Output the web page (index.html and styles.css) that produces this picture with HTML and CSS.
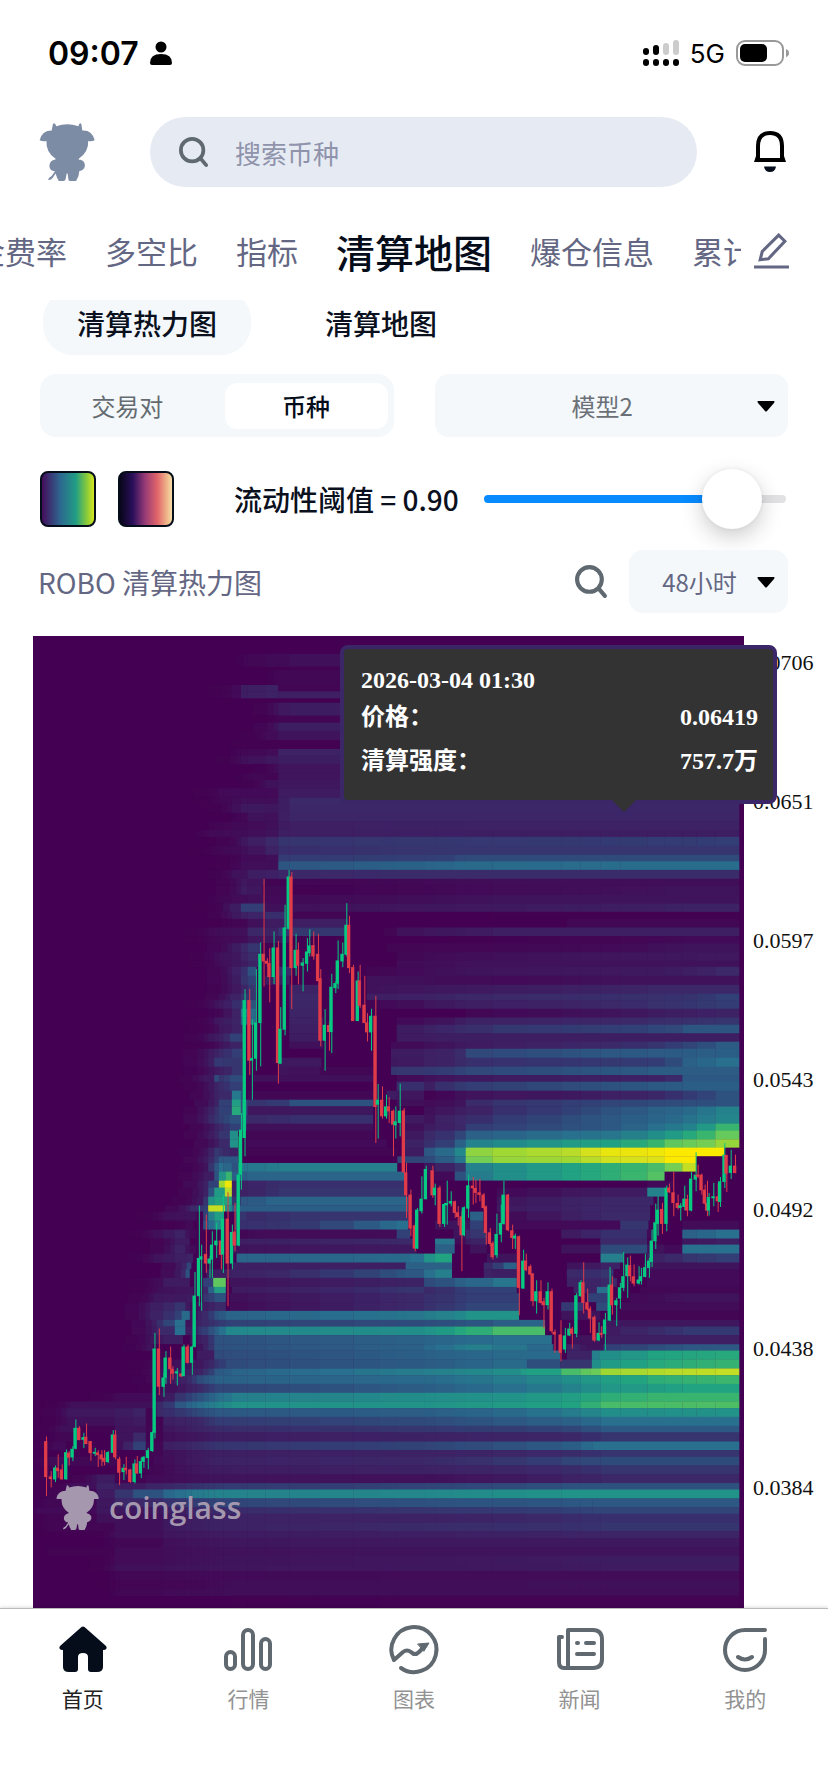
FILE: index.html
```html
<!DOCTYPE html>
<html lang="zh-CN">
<head>
<meta charset="utf-8">
<meta name="viewport" content="width=device-width, initial-scale=1">
<title>清算地图</title>
<link rel="stylesheet" href="styles.css">
</head>
<body>
<svg class="sprite" aria-hidden="true">
  <symbol id="mascot" viewBox="20 34 178 184">
    <path d="M66 40Q72 34 76 47Q110 35 144 47Q147 34 153 40L156 60Q186 58 194 90Q184 94 174 92Q176 124 146 146Q142 150 150 150Q164 154 164 168Q162 182 147 184Q146 202 137 215H118Q113 215 113 208L111 192H108L105 208Q104 215 98 215H84Q78 206 74 192L66 204Q60 213 51 212Q52 204 62 200L72 185Q55 184 55 168Q56 154 70 150Q77 149 73 146Q44 126 46 92Q34 94 25 90Q32 60 62 60Z" fill="currentColor"/>
  </symbol>
  <symbol id="magnifier" viewBox="0 0 32 34">
    <circle cx="14" cy="15" r="12" fill="none" stroke="currentColor" stroke-width="4"/>
    <path d="M23 24L29 31" stroke="currentColor" stroke-width="4" stroke-linecap="round"/>
  </symbol>
  <symbol id="caret" viewBox="0 0 18 12">
    <path d="M1 1H17Q18 1 17 3L10 11Q9 12 8 11L1 3Q0 1 1 1Z" fill="#000"/>
  </symbol>
</svg>

<header class="top">
  <div class="status">
    <div class="status-side">
      <span class="clock">09:07</span>
      <svg class="person" viewBox="0 0 22 24"><circle cx="11" cy="6" r="5.5"/><path d="M0 22Q0 13 11 13Q22 13 22 22Q22 24 20 24H2Q0 24 0 22Z"/></svg>
    </div>
    <div class="status-side">
      <svg class="signal" viewBox="0 0 36 26">
        <g fill="#ccc"><rect x="20" y="3" width="6" height="12" rx="3"/><rect x="30" y="0" width="6" height="15" rx="3"/></g>
        <rect x="0" y="8" width="6" height="7" rx="3"/><rect x="10" y="5" width="6" height="10" rx="3"/>
        <rect x="0" y="19" width="6" height="7" rx="3"/><rect x="10" y="19" width="6" height="7" rx="3"/><rect x="20" y="19" width="6" height="7" rx="3"/><rect x="30" y="19" width="6" height="7" rx="3"/>
      </svg>
      <span class="network">5G</span>
      <svg class="battery" viewBox="0 0 54 26"><rect x="1" y="1" width="46" height="24" rx="8" fill="none" stroke="#999" stroke-width="2"/><rect x="4" y="4" width="27" height="18" rx="5"/><path d="M50 9Q53 10 53 13Q53 16 50 17Z" fill="#999"/></svg>
    </div>
  </div>
  <div class="search-row">
    <svg class="logo"><use href="#mascot"/></svg>
    <label class="search">
      <svg class="search-icon"><use href="#magnifier"/></svg>
      <input type="text" placeholder="搜索币种" aria-label="搜索币种">
    </label>
    <button class="icon-button" aria-label="通知">
      <svg class="bell" viewBox="0 0 32 42"><path d="M4 28V15Q4 2 16 2Q28 2 28 15V28" fill="none" stroke="#000" stroke-width="4"/><path d="M2 25H30L32 31H0Z"/><path d="M6 24H26V27H6Z" fill="#fff"/><path d="M10 35.500H22Q21 41 16 41Q11 41 10 35.500Z" fill="#050d1b"/></svg>
    </button>
  </div>
  <nav class="tabs">
    <div class="tab-strip">
      <a href="#">资金费率</a><a href="#">多空比</a><a href="#">指标</a><a href="#" class="active">清算地图</a><a href="#">爆仓信息</a><a href="#">累计</a>
    </div>
    <button class="icon-button" aria-label="编辑">
      <svg class="pencil" viewBox="0 0 34 36" fill="none" stroke="#646783" stroke-width="3"><path d="M24 2L30 8L14 25L6 26L8 18Z"/><path d="M0 33H34"/></svg>
    </button>
  </nav>
</header>

<main>
  <div class="subtabs"><button class="active">清算热力图</button><button>清算地图</button></div>
  <div class="filters">
    <div class="segmented"><button>交易对</button><button class="active">币种</button></div>
    <div class="dropdown"><select aria-label="模型"><option>模型2</option></select><svg class="caret"><use href="#caret"/></svg></div>
  </div>
  <div class="threshold">
    <div class="swatches"><button class="swatch viridis" aria-label="配色一"></button><button class="swatch magma" aria-label="配色二"></button></div>
    <label for="liquidity">流动性阈值 = 0.90</label>
    <input id="liquidity" type="range" min="0" max="1" step="0.01" value="0.90">
  </div>
  <div class="chart-head">
    <h1>ROBO 清算热力图</h1>
    <button class="icon-button" aria-label="搜索"><svg class="find"><use href="#magnifier"/></svg></button>
    <div class="dropdown period"><select aria-label="周期"><option>48小时</option></select><svg class="caret"><use href="#caret"/></svg></div>
  </div>
  <section class="chart">
    <div class="plot">
      <svg id="heatmap" viewBox="40 18 2131 2918" preserveAspectRatio="none" role="img" aria-label="清算热力图"></svg>
      <div class="watermark"><svg><use href="#mascot"/></svg><span>coinglass</span></div>
    </div>
    <ol class="axis"><li>0.0706</li><li>0.0651</li><li>0.0597</li><li class="short">0.0543</li><li>0.0492</li><li>0.0438</li><li>0.0384</li></ol>
    <div class="tooltip">
      <div class="tooltip-date">2026-03-04 01:30</div>
      <dl><dt>价格：</dt><dd>0.06419</dd><dt>清算强度：</dt><dd>757.7万</dd></dl>
      <svg class="pointer" viewBox="0 0 32 16"><path d="M0 0H32L16 16Z" fill="#3b2767"/><path d="M4 0H28L16 12Z" fill="#333"/></svg>
    </div>
  </section>
</main>

<nav class="bottom">
  <a href="#" class="active"><svg viewBox="0 0 48 48"><path d="M22.500 1Q24 0 25.500 1L47 20Q49 23 45 24H44V41Q44 46 38 46H32Q29 46 29 43V31Q29 27 24 27Q19 27 19 31V43Q19 46 16 46H10Q4 46 4 41V24H3Q-1 23 1 20Z" fill="#050d1b"/></svg><span>首页</span></a>
  <a href="#"><svg viewBox="0 0 48 48" class="line"><rect x="2" y="26" width="9" height="17" rx="4.500"/><rect x="19" y="4" width="10" height="39" rx="5"/><rect x="37" y="13" width="9" height="30" rx="4.500"/></svg><span>行情</span></a>
  <a href="#"><svg viewBox="0 0 48 48" class="line"><path d="M11 42A22.500 22.500 0 1 0 4 34L13 26Q17 23 21 26Q25 30 29 26L34 21"/><path d="M28 18L39 17L34 25Z" fill="#606970" stroke-width="1"/></svg><span>图表</span></a>
  <a href="#"><svg viewBox="0 0 48 48" class="line"><path d="M13 4H37Q46 4 46 14V33Q46 42 37 42H8Q3 42 3 36V11H6M12 4V42M21 17H22M30 17H38M21 28H38"/></svg><span>新闻</span></a>
  <a href="#"><svg viewBox="0 0 48 48" class="line"><path d="M44 4H24A20 20 0 1 0 44 24V13M17 31Q24 36 31 31"/></svg><span>我的</span></a>
</nav>
<script src="chart.js"></script>
</body>
</html>
```

FILE: styles.css
```css
* { box-sizing: border-box; }
body {
  margin: 0;
  min-height: 100vh;
  display: flex;
  flex-direction: column;
  background: #fff;
  color: #0a101d;
  font-family: "Noto Sans CJK SC", "Noto Sans", sans-serif;
  font-size: 28px;
  overflow-x: hidden;
}
button, input, select { font: inherit; color: inherit; border: 0; padding: 0; background: none; }
a { color: inherit; text-decoration: none; }
svg { display: block; flex: none; }
.sprite { position: absolute; width: 0; height: 0; }

.status { height: 106px; padding: 0 38px 0 48px; display: flex; align-items: center; justify-content: space-between; color: #000; font-family: Inter, sans-serif; }
.status-side { display: flex; align-items: center; gap: 11px; }
.clock { font-size: 32px; font-weight: 600; }
.person { width: 22px; height: 24px; }
.signal { width: 36px; height: 26px; }
.network { font-size: 26px; }
.battery { width: 54px; height: 26px; }

.search-row { padding: 11px 40px 0 38px; display: flex; align-items: center; }
.logo { width: 58px; height: 62px; color: #7d8ca5; }
.search { flex: 1; min-width: 0; height: 70px; margin: 0 55px 0 54px; padding: 0 29px; display: flex; align-items: center; gap: 26px; border-radius: 35px; background: #e6ebf3; }
.search-icon { width: 30px; height: 32px; color: #606970; }
.search input { flex: 1; min-width: 0; font-size: 26px; outline: 0; }
.search input::placeholder { color: #8f93ab; opacity: 1; }
.icon-button { display: flex; align-items: center; justify-content: center; cursor: pointer; }
.bell { width: 36px; height: 42px; }

.tabs { height: 98px; margin-top: 15px; padding-right: 39px; display: flex; align-items: center; gap: 13px; color: #646783; }
.tab-strip { flex: 1; min-width: 0; display: flex; align-items: center; justify-content: flex-start; gap: 38px; overflow: hidden; white-space: nowrap; font-size: 31px; line-height: 60px; }
.tab-strip a:first-child { margin-left: -57px; }
.tab-strip .active { color: #050d1b; font-size: 39px; font-weight: 500; }
.pencil { width: 35px; height: 37px; }

main { flex: 1; display: flex; flex-direction: column; }
.subtabs { height: 55px; padding: 0 43px; display: flex; align-items: flex-end; gap: 40px; overflow: hidden; }
.subtabs button { height: 65px; padding: 0 34px; border-radius: 30px; font-weight: 500; }
.subtabs .active { background: #f4f8fb; }
.filters { margin-top: 19px; padding: 0 40px; display: grid; grid-template-columns: 1fr 1fr; gap: 41px; font-size: 24px; }
.segmented { height: 63px; padding: 9px 6px; display: grid; grid-template-columns: 1fr 1fr; gap: 16px; border-radius: 16px; background: #f4f8fb; color: #646b70; }
.segmented button { border-radius: 12px; line-height: 46px; }
.segmented .active { background: #fff; color: #050d1b; font-weight: 500; }
.dropdown { position: relative; height: 63px; border-radius: 14px; background: #f4f8fb; color: #6b7077; font-size: 24px; }
.dropdown select { width: 100%; height: 100%; padding-right: 18px; appearance: none; text-align-last: center; text-align: center; }
.caret { position: absolute; top: 26px; right: 13px; width: 18px; height: 12px; pointer-events: none; }

.threshold { margin-top: 32px; padding: 0 42px 0 40px; height: 60px; display: flex; align-items: center; font-weight: 500; }
.swatches { display: flex; gap: 22px; margin-right: 60px; }
.swatch { width: 56px; height: 56px; border: 2px solid #050d1b; border-radius: 8px; }
.viridis { background: linear-gradient(90deg, #440d5c, #2d6790 35%, #209d84 65%, #91ce34 88%, #d5e423); }
.magma { background: linear-gradient(90deg, #08051a, #2b105c 25%, #963a76 48%, #e1656a 72%, #f0bd8d 92%, #f6dca9); }
.threshold label { margin-right: 25px; white-space: nowrap; }
.threshold input { flex: 1; min-width: 0; height: 60px; margin: 0; appearance: none; }
.threshold input::-webkit-slider-runnable-track { height: 8px; border-radius: 4px; background: linear-gradient(90deg, #078bff 82%, #e2e2e4 82%); }
.threshold input::-webkit-slider-thumb { appearance: none; width: 60px; height: 60px; margin-top: -26px; border-radius: 50%; background: #fff; box-shadow: 0 8px 22px #0003, 0 0 4px #0001; }

.chart-head { margin-top: 21px; padding: 0 40px 0 38px; display: flex; align-items: center; }
.chart-head h1 { flex: 1; margin: 0; color: #646783; font-size: 28px; font-weight: 400; }
.find { width: 33px; height: 35px; color: #606970; }
.period { width: 159px; margin-left: 21px; color: #646783; }

.chart { position: relative; flex: 1; margin: 23px 0 0 33px; display: grid; grid-template-columns: 1fr 84px; }
.plot { position: relative; min-height: 900px; }
.plot > svg { position: absolute; width: 100%; height: 100%; }
.axis { margin: 0; padding: 14px 0 0 9px; list-style: none; font: 22px/26px "Liberation Serif", serif; color: #111; }
.axis li { height: 139px; }
.axis .short { height: 130px; }
.axis li:last-child { height: 26px; }
.watermark { position: absolute; left: 22px; bottom: 76px; display: flex; align-items: center; gap: 9px; color: #a598ae; font: 600 30px/40px "Open Sans", sans-serif; }
.watermark svg { width: 45px; height: 49px; }
.tooltip { position: absolute; top: 9px; right: 51px; width: 437px; height: 159px; padding: 16px 15px 0 17px; border: 4px solid #3b2767; border-radius: 8px; background: #333; color: #fff; font: bold 24px/30px "Liberation Serif", "Noto Sans CJK SC", serif; }
.tooltip dl { margin: 0; display: grid; grid-template-columns: 1fr auto; line-height: 44px; }
.tooltip dd { margin: 0; }
.pointer { position: absolute; right: 133px; top: 151px; width: 32px; height: 16px; }

.bottom { position: relative; height: 184px; padding-top: 17px; display: grid; grid-template-columns: repeat(5, 1fr); align-items: start; background: #fff; border-top: 1px solid #bbb; box-shadow: 0 0 4px #0003; color: #929292; font-size: 21px; }
.bottom a { display: flex; flex-direction: column; align-items: center; gap: 8px; line-height: 32px; }
.bottom svg { width: 48px; height: 48px; overflow: visible; }
.bottom .active { color: #222; }
.line { fill: none; stroke: #606970; stroke-width: 4; stroke-linecap: round; stroke-linejoin: round; }
```

FILE: chart.js
```js
// Heat rows: "top: start value, start value, ..." in plot units, value 0-100.
const rows = `
18:
72:683 4,808 8
110:808 2
120:775 4
165:636 5,663 17,736 20,775 3
184:636 5,663 17,736 20,775 18
204:
218:775 13,808 16
257:775 3
278:775 17
303:736 6,775 10
330:630 1
357:663 4,736 6,775 21
377:663 8,736 13,775 17
402:775 11
430:683 4,736 3,775 11
450:736 9,775 12
475:597 5,736 5,775 15
503:583 3,663 8,736 7,775 17,808 25
522:636 8,663 14,736 12,775 17,808 24
549:663 4,683 9,736 8,775 18,808 23
575:565 2,736 8,775 15,808 18,1337 20
600:530 2,565 5,736 9,775 18,2085 17
621:663 12,683 18,775 30,1700 32,2085 34
648:580 3,663 7,683 11,775 27,1212 30
675:663 5,736 7,775 33,1212 34,1337 38
694:663 7,775 41,808 42,1040 44,1337 48,1800 49
720:636 9,683 17,736 19,775 24,1130 26
747:663 13,736 2,1040 4,1212 5,1417 7
767:663 15,727 5,820 1,1304 5,1741 8,1986 10
795:597 4,683 8,736 5,1163 7,1417 10
821:597 3,630 16,663 34,736 8,1092 11,1881 18,1986 21
846:636 14,663 19,736 27,795 15,820 3,985 0,1417 1
867:636 3,683 8,736 15,820 18,985 0,1640 4
893:565 5,636 8,683 24,736 20,775 31,975 0,1092 3,1130 9,1337 15,1417 18
919:565 3,636 6,683 12,808 0,1304 1,1730 3,1986 5
940:636 16,663 24,683 30,723 0,1100 3,1741 5,1986 10
967:583 7,636 12,663 22,683 26,720 0,1130 4,1304 7,1623 10,2085 13
993:583 5,663 16,683 22,715 0,1130 6,1337 9
1011:636 19,663 28,683 40,710 0,775 25,815 0,1040 3,1337 10,1881 14,1986 18,2085 25
1038:636 16,663 29,683 35,708 0,736 16,810 0,1040 9,1212 7,1417 5,1800 9
1065:636 13,663 22,683 30,708 0,808 20,900 0,1040 9,1417 16,1741 20,1881 24
1092:630 20,663 30,690 30,708 0,808 24,903 0,1040 18,1212 20,1304 24,1986 29,2085 35
1111:565 6,597 13,636 27,663 35,683 40,708 0,808 23,903 0,1040 3,1337 18,1623 22,2085 33
1137:597 4,636 20,663 53,690 48,708 0,808 22,903 0,1337 4,1741 10,1881 16,2085 20
1163:565 5,583 12,636 22,663 45,683 50,708 0,808 20,910 0,1130 5,1245 10,1337 20,1741 24,2085 30
1185:583 6,597 12,636 20,670 0,808 18,900 0,1130 16,1304 26,1417 31,1741 34,1933 37,1986 41
1211:565 12,597 18,630 35,663 30,675 0,808 16,905 0,1130 15,1245 17
1236:583 5,630 20,663 18,675 0,808 8,910 0,1113 5,1212 8,1304 14,1417 18,1741 25,1881 30,1986 36,2085 43
1257:565 15,583 20,597 25,636 34,668 0,1113 15,1245 20,1304 26,1337 37,1623 40,1741 42,2085 44
1284:565 17,583 32,636 30,668 0,775 14,905 0,1113 14,1245 20,1337 28,1881 33,1933 38,1986 45,2085 50
1311:565 10,597 18,636 30,668 0,775 10,910 4,1060 0,1113 30,1212 32,1337 37,1623 40,1881 43
1336:550 14,583 38,597 30,630 38,668 0,700 8,1060 0,1130 6,1337 14,1881 20,1933 25,1986 42
1356:565 12,583 22,630 34,668 0,1060 0,1130 27,1212 18,1245 28,1337 34,1741 40,1986 44
1383:583 20,597 25,636 53,663 40,668 0,683 4,1060 0,1100 15,1212 2,1337 10,1623 14,1881 24,2085 40
1410:597 35,636 66,663 40,683 30,736 32,808 40,1060 0,1130 8,1212 6,1304 10,1337 26,1417 30,1741 36,2085 40
1430:565 20,597 35,636 70,663 40,683 12,1060 0,1212 8,1337 20,1417 28,1623 35,1741 40,1986 48,2085 56
1456:565 25,597 34,630 40,663 35,683 25,808 28,1060 0,1150 15,1212 10,1245 20,1417 33,1741 42,1933 48,2085 57
1482:583 20,630 35,680 8,1060 0,1150 8,1212 16,1304 24,1337 34,1741 42,1881 50,1986 56,2085 75
1503:565 15,597 30,630 60,655 0,680 4,1060 0,1150 14,1212 25,1304 36,1337 45,1741 52,1881 60,1986 70,2085 83
1529:597 25,630 62,655 0,680 5,1100 0,1150 20,1212 28,1304 45,1337 56,1623 65,1741 67,1881 75,1933 82,2028 85,2085 89
1554:550 10,583 32,630 20,655 0,680 3,1132 0,1150 15,1212 42,1245 48,1304 58,1337 88,1417 90,1623 92,1741 97,1881 98,1933 100,2112 0
1580:565 25,583 35,597 42,636 42,655 0,1132 36,1212 38,1245 43,1304 52,1337 85,1417 89,1623 90,1741 94,1881 95,1933 100,2028 0
1600:550 10,565 30,597 50,636 40,660 52,775 55,1132 0,1212 10,1245 20,1304 30,1337 56,1417 60,1741 72,1881 78,1933 85,1986 93,2028 0
1626:550 15,583 40,597 62,618 75,636 44,680 46,1155 0,1212 5,1304 40,1337 54,1417 60,1741 72,1881 80,1933 0
1653:565 35,597 90,615 98,636 20,775 28,1155 0,1881 5,1960 0
1674:550 20,565 40,583 65,615 92,636 20,775 30,1160 0,1430 5,1741 15,1881 56,1933 0
1701:530 12,550 30,565 62,583 68,636 30,663 42,736 46,1165 0,1430 12,1623 20,1741 24,1900 0
1727:510 25,550 35,565 93,615 60,636 44,1165 0,1430 15,1741 24,1890 0
1746:430 8,510 10,530 0,550 35,565 55,583 66,610 0,645 30,680 26,808 30,1165 0,1350 45,1390 0,1430 6,1741 25,1890 0
1773:497 5,520 0,550 40,583 58,605 0,645 28,775 30,1130 50,1165 0,1245 10,1350 35,1390 0,1430 5,1800 30,1885 0,1986 6
1800:400 8,465 20,510 5,530 0,640 4,700 6,1130 35,1170 0,1300 10,1350 30,1400 0,1623 15,1741 28,1880 5,1900 0,1986 45,2085 50
1827:465 15,510 0,630 18,1130 25,1180 0,1245 52,1304 5,1350 20,1400 0,1740 25,1881 0,1986 12,2085 18
1845:465 20,510 5,530 0,636 10,1130 14,1190 0,1245 45,1304 0,1350 10,1400 0,1623 10,1741 38,1881 10,1933 5,1986 50
1872:400 10,465 18,500 22,520 0,650 46,1130 48,1170 50,1212 62,1245 68,1296 0,1400 10,1440 10,1490 0,1741 55,1810 0,1880 20,1986 30,2085 34
1899:500 36,515 0,636 18,1157 45,1296 0,1391 25,1450 45,1490 0,1640 10,1741 20,1800 0,1870 10
1919:497 40,510 0,560 15,636 20,1157 42,1245 55,1296 0,1391 20,1490 10,1500 0,1640 25,1741 30,1780 0,1870 5
1945:400 6,430 15,510 0,550 35,580 82,618 0,630 10,1157 20,1212 38,1417 52,1490 0,1640 20,1740 25,1790 0,1880 5
1972:410 8,500 12,520 0,550 25,565 45,583 66,618 0,636 15,1157 30,1212 25,1337 35,1490 0,1660 20,1730 50,1770 0,1860 4
1991:400 12,500 15,520 0,550 30,583 40,618 0,630 8,1157 25,1337 34,1500 0,1700 35,1770 0,1830 5,1986 10
2018:390 18,465 30,510 8,545 15,583 25,618 0,630 6,1157 25,1337 36,1500 0,1623 32,1690 0,1728 38,1765 0,1800 6
2044:390 20,465 35,485 48,510 10,545 25,583 40,618 46,1157 52,1304 58,1337 62,1497 0,1623 10,1741 0,1790 3
2071:410 28,465 50,497 10,545 25,618 35,1160 38,1304 40,1497 46,1575 0,1760 12
2091:410 25,465 50,497 15,545 34,583 45,618 58,1130 60,1212 62,1337 72,1417 78,1575 0,1740 15,1800 22,2000 32
2117:390 12,430 18,490 0,510 10,545 20,583 40,1157 45,1417 50,1595 0,1660 10,1740 8,1760 18
2144:380 10,400 0,530 10,565 30,583 40,1157 45,1337 55,1595 45,1600 0,1640 20,1700 10,1750 35,1986 42
2163:400 0,530 15,583 38,1157 44,1417 48,1620 0,1640 20,1715 55,1737 60,1881 68,2085 70
2190:400 5,530 12,583 30,618 38,1212 43,1417 48,1620 30,1715 60,1741 65,1881 70,2085 74
2217:400 8,530 20,583 42,636 46,1212 55,1417 60,1500 65,1623 78,1710 84,1741 90,1933 92,2085 93
2237:410 10,500 25,530 38,583 45,1212 48,1623 60,1741 66,1881 72,2085 76
2263:430 8,470 12,530 25,583 36,1212 44,1623 56,1741 63,1986 68
2290:285 5,410 8,465 30,530 40,583 48,636 55,1212 60,1417 62,1623 66,1741 72,1881 75
2316:150 8,410 25,465 42,530 50,583 56,636 62,1212 62,1623 68,1741 78,2085 79
2336:140 12,285 16,340 20,378 2,410 25,530 38,583 42,1212 44,1417 48,1623 54,1741 60,2085 62
2362:140 8,285 12,340 15,378 2,430 18,530 24,583 33,1212 38,1417 42,1623 45,1741 50
2389:120 8,180 2,285 10,378 3,430 12,583 26,1212 31,1623 36,1741 42
2409:120 4,180 0,285 10,340 25,378 2,430 8,530 12,583 17,1212 20,1623 24,1741 30
2436:100 5,140 0,285 8,310 20,340 35,378 4,430 18,583 30,1212 36,1623 44,1717 50
2462:285 0,390 4,430 8,583 18,1212 20,1623 26,1741 30
2482:90 6,150 4,300 0,400 5,583 20,1212 25,1623 36,1741 38
2508:400 4,583 16,1212 20,1623 26,1741 30
2535:230 15,285 2,378 5,583 10,1212 8,1623 20,1741 24
2561:150 8,230 20,285 15,378 22,465 26,583 32,1212 36,1623 40
2580:100 4,230 15,285 30,340 40,465 50,583 56,1212 58,1623 62
2607:80 4,230 12,285 24,465 30,583 36,1212 40,1717 42
2634:50 5,230 12,465 20,583 26,1212 30,1717 36
2653:80 3,230 8,465 15,583 20,1212 20,1741 28
2680:80 3,285 8,465 15,583 20,1212 26,1623 28,1741 30
2706:285 8,465 12,583 15,1212 18,1741 22
2727:285 4,430 8,636 12,1212 14
2753:80 2,285 6,583 9,1212 10
2779:285 6,636 10,1212 12,1741 16
2806:285 8,636 11,1212 12,1741 15
2826:300 4,530 5,1212 6
2852:300 3,530 4,636 7,1741 8
2879:300 4,636 7
2899:636 1,1212 2`;

// Candles: x, high, body top, body bottom, low. A leading "-" marks a falling candle.
const candles = `
-78 2421 2435 2543 2600;-92 2525 2541 2549 2574;105 2508 2514 2550 2558;-113 2475 2515 2525 2545;-125 2505 2520 2550 2550;138 2460 2468 2550 2550;-146 2465 2470 2485 2508;157 2450 2458 2484 2495;166 2370 2395 2458 2460;-177 2390 2395 2432 2432;190 2410 2423 2431 2456;-198 2382 2422 2444 2444;-211 2435 2435 2471 2494;224 2455 2467 2473 2480;-233 2462 2469 2477 2513;-244 2462 2475 2490 2510;-252 2462 2485 2497 2508;263 2465 2468 2498 2500;278 2402 2415 2470 2471;-285 2402 2415 2484 2490;-297 2482 2488 2530 2567;310 2504 2515 2528 2552;-317 2482 2515 2523 2535;-330 2518 2520 2558 2560;343 2490 2502 2558 2562;-350 2480 2502 2532 2534;362 2485 2495 2532 2546;370 2480 2482 2497 2515;383 2455 2462 2486 2520;396 2405 2408 2465 2467;403 2110 2157 2410 2427;-416 2097 2157 2272 2297;430 2230 2244 2272 2302;436 2165 2184 2245 2263;-450 2151 2184 2219 2263;-457 2210 2218 2233 2250;470 2216 2225 2232 2268;-483 2230 2232 2241 2242;490 2145 2151 2240 2240;-502 2145 2151 2200 2202;515 2148 2151 2200 2236;523 1927 1998 2152 2154;536 1728 1885 2000 2030;543 1845 1880 1890 2044;-557 1755 1873 1902 1930;568 1880 1887 1902 1945;575 1805 1845 1890 1945;588 1780 1833 1847 1885;-602 1828 1833 1876 1919;608 1695 1767 1875 1930;-622 1688 1767 1902 2030;635 1785 1807 1902 1919;-643 1720 1806 1848 1865;655 1520 1635 1848 1850;662 1450 1500 1635 1680;673 1078 1111 1525 1580;-687 1078 1111 1293 1336;695 1170 1285 1293 1410;707 1018 1178 1287 1323;720 938 972 1180 1310;-730 747 972 995 1070;-740 985 993 1002 1010;-747 955 1000 1042 1118;760 905 953 1042 1063;-773 933 953 1300 1362;780 1132 1197 1302 1302;793 825 893 1200 1217;805 720 740 897 900;-813 727 740 1015 1138;826 912 960 1015 1038;-833 938 960 1008 1064;847 985 998 1008 1085;860 925 965 1002 1025;867 898 947 970 980;-879 905 946 980 990;-893 912 972 1054 1054;-900 1018 1045 1233 1250;913 1138 1185 1233 1323;-926 1175 1186 1207 1263;933 1032 1071 1207 1270;945 1055 1060 1075 1090;952 932 992 1062 1078;966 938 972 995 1012;978 820 885 975 980;-986 858 885 1015 1030;-998 1005 1012 1174 1174;1012 1025 1052 1174 1174;-1018 1005 1052 1128 1135;-1032 1038 1125 1180 1180;-1040 1150 1178 1208 1235;1052 1137 1158 1208 1263;-1065 1098 1158 1432 1540;1072 1363 1410 1425 1527;-1085 1370 1410 1460 1467;1097 1395 1430 1460 1467;-1105 1402 1430 1445 1480;-1118 1440 1443 1485 1580;1125 1430 1475 1487 1527;1138 1362 1443 1480 1520;-1150 1435 1442 1628 1630;-1157 1600 1628 1697 1765;-1170 1680 1695 1797 1820;-1183 1780 1787 1857 1865;1190 1735 1740 1857 1858;1203 1640 1707 1745 1752;1216 1608 1618 1709 1709;-1236 1608 1622 1697 1705;1243 1662 1674 1697 1727;-1257 1668 1674 1783 1792;1271 1720 1723 1783 1792;1279 1653 1720 1727 1785;1291 1685 1714 1722 1730;-1303 1713 1715 1750 1765;-1312 1730 1748 1762 1788;-1323 1745 1760 1817 1925;1330 1730 1733 1817 1820;1343 1635 1667 1737 1765;-1357 1642 1668 1676 1725;-1365 1650 1675 1690 1720;-1377 1647 1688 1696 1715;-1389 1690 1695 1735 1738;-1396 1728 1730 1810 1845;-1408 1795 1808 1843 1850;-1416 1835 1840 1883 1890;1428 1752 1813 1877 1885;1441 1725 1780 1815 1838;1449 1653 1695 1783 1785;-1462 1693 1695 1802 1805;-1475 1785 1802 1825 1858;1483 1812 1818 1827 1858;-1495 1818 1820 1975 2057;1508 1860 1893 1977 1977;-1516 1872 1893 1922 1925;-1529 1905 1910 1935 1936;-1536 1930 1932 2015 2030;1547 1952 1985 2015 2052;-1560 1952 1985 2020 2022;-1569 2005 2015 2027 2097;1581 1958 1985 2027 2040;-1593 1977 1985 2105 2110;-1602 2100 2107 2115 2170;-1620 2072 2115 2170 2195;1633 2095 2118 2160 2170;1646 2080 2097 2118 2120;-1654 2092 2097 2113 2157;1667 1990 1997 2113 2123;1680 1952 1958 2000 2002;-1688 1898 1958 2020 2052;-1700 1977 2018 2040 2043;-1708 2030 2037 2067 2110;-1721 2058 2062 2133 2137;1734 2078 2110 2133 2135;-1742 2090 2110 2116 2125;1753 2050 2070 2113 2163;1767 1912 1965 2073 2075;-1774 1940 1965 2027 2055;1787 2005 2012 2027 2090;1798 1960 1973 2007 2038;1808 1867 1940 1975 1985;1820 1883 1905 1940 2005;-1828 1878 1907 1940 1955;-1839 1905 1940 1962 1970;1854 1910 1950 1962 1965;1861 1915 1940 1955 1965;1873 1873 1913 1942 1943;1885 1885 1893 1915 1945;1893 1800 1833 1897 1912;1904 1722 1778 1835 1858;1911 1700 1740 1783 1818;-1924 1720 1738 1783 1813;1937 1668 1674 1783 1805;-1945 1662 1674 1688 1690;-1958 1627 1688 1720 1760;-1971 1695 1720 1735 1740;1979 1720 1727 1735 1773;1991 1668 1707 1732 1742;-1999 1695 1708 1743 1760;2011 1627 1647 1743 1745;2025 1568 1635 1650 1685;-2031 1605 1635 1641 1645;-2042 1632 1635 1682 1695;-2052 1665 1680 1722 1725;-2059 1653 1720 1743 1760;2064 1690 1702 1743 1758;2078 1660 1700 1706 1730;-2091 1662 1700 1715 1747;2098 1642 1655 1717 1732;2111 1540 1575 1657 1675;-2117 1575 1576 1632 1687;2130 1560 1608 1630 1648;-2143 1575 1608 1630 1631`;

const ramp = [[0, 68, 0, 82], [10, 64, 20, 93], [24, 60, 39, 105], [34, 50, 62, 117], [42, 44, 88, 131], [50, 40, 112, 142], [60, 34, 142, 138], [68, 33, 163, 130], [76, 60, 182, 108], [84, 108, 204, 90], [90, 160, 216, 51], [95, 220, 226, 25], [100, 251, 233, 0]];

function color(v) {
  const i = Math.max(1, ramp.findIndex(s => s[0] >= v));
  const a = ramp[i - 1], b = ramp[i];
  const t = (v - a[0]) / (b[0] - a[0]);
  return `rgb(${[1, 2, 3].map(k => Math.round(a[k] + (b[k] - a[k]) * t))})`;
}

const rect = (x, y, w, h, fill) => `<rect x="${x}" y="${y}" width="${w}" height="${h}" fill="${fill}"/>`;
const right = 2157;
const columns = [430, 465, 497, 515, 535, 550, 565, 583, 597, 610, 636, 683, 736, 808, 900, 1000, 1080, 1130, 1212, 1245, 1304, 1337, 1417, 1520, 1623, 1681, 1741, 1800, 1881, 1933, 1986, 2028, 2085];

// Ease small steps between neighbouring cells over the time columns they span.
function smooth(cells) {
  const result = [];
  const [x0, v0] = cells[0] || [];
  if (v0 > 2) {
    result.push([Math.max(43, x0 - 75), v0 * 0.15], [Math.max(43, x0 - 33), v0 * 0.35], [Math.max(43, x0 - 14), v0 * 0.6]);
  }
  cells.forEach(([x, v], j) => {
    result.push([x, v]);
    const next = cells[j + 1];
    if (!next || !v || !next[1] || Math.abs(next[1] - v) > 22) return;
    columns.filter(c => c > x + 8 && c < next[0] - 8).forEach(c => {
      result.push([c, v + (next[1] - v) * (c - x) / (next[0] - x)]);
    });
  });
  return result;
}

const heat = rows.trim().split("\n").map(line => {
  const [top, cells] = line.split(":");
  return { top: +top, cells: smooth(cells ? cells.split(",").map(c => c.trim().split(" ").map(Number)) : []) };
});

let out = rect(40, 18, 2131, 2918, color(0));
heat.forEach(({ top, cells }, i) => {
  const bottom = i + 1 < heat.length ? heat[i + 1].top : 2936;
  cells.forEach(([x, v], j) => {
    const end = j + 1 < cells.length ? cells[j + 1][0] : right;
    out += rect(x, top, end - x + (end < right ? 1 : 0), bottom - top + 1, color(v));
  });
});
candles.trim().split(";").forEach(item => {
  const [sx, high, top, bottom, low] = item.trim().split(" ").map(Number);
  const x = Math.abs(sx);
  const fill = sx < 0 ? "#df3b49" : "#06c982";
  out += rect(x + 1, high, 3, low - high, fill) + rect(x - 5, top, 10, Math.max(6, bottom - top), fill);
});
document.getElementById("heatmap").innerHTML = out;
```
